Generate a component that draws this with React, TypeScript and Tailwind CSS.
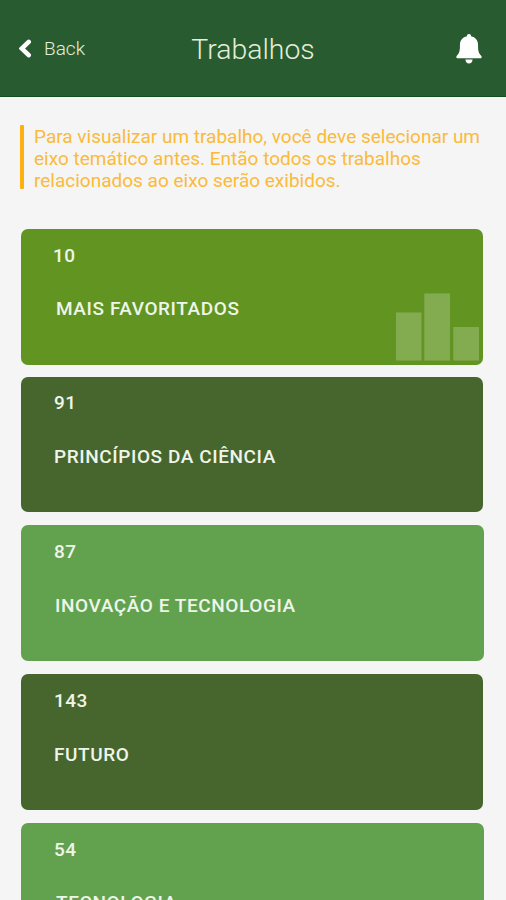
import React from 'react';
import { clsx } from 'clsx';

interface Axis {
  id: number;
  count: number;
  title: string;
  cardClass: string;
  countClass?: string;
  titleClass?: string;
  showChart?: boolean;
}

const axes: Axis[] = [
  {
    id: 1,
    count: 10,
    title: 'MAIS FAVORITADOS',
    cardClass: 'mr-[23.5px] mb-3 h-[135.5px] bg-[#629421]',
    countClass: '-ml-px -mb-px',
    titleClass: 'ml-0.5',
    showChart: true,
  },
  {
    id: 2,
    count: 91,
    title: 'PRINCÍPIOS DA CIÊNCIA',
    cardClass: 'mr-[23.5px] mb-[13px] h-[135.5px] bg-[#47662e]',
    countClass: '-mt-px',
  },
  {
    id: 3,
    count: 87,
    title: 'INOVAÇÃO E TECNOLOGIA',
    cardClass: 'mr-[22px] mb-[13px] h-[136px] bg-[#62a24f]',
    titleClass: 'ml-px',
  },
  {
    id: 4,
    count: 143,
    title: 'FUTURO',
    cardClass: 'mr-[23.5px] mb-[13px] h-[136px] bg-[#47662e]',
  },
  {
    id: 5,
    count: 54,
    title: 'TECNOLOGIA',
    cardClass: 'mr-[22px] h-[136px] bg-[#62a24f]',
    countClass: '-mb-px',
    titleClass: 'ml-0.5',
  },
];

const Header: React.FC = () => (
  <header className="grid h-[97px] shrink-0 grid-cols-3 items-center border-b border-[#124d1b] bg-[#285c30] text-[#e4efdb]">
    <button type="button" className="flex items-center pl-[19px] text-left">
      <svg width="13" height="19" viewBox="0 0 13 19" fill="none" aria-hidden="true">
        <path d="M9.7 2.9 2.7 9.5 9.7 16.1" stroke="#fff" strokeWidth="4.6" strokeLinecap="round" />
      </svg>
      <span className="ml-3 pt-px text-[19px] leading-6 font-light">Back</span>
    </button>
    <h1 className="pt-[3px] text-center text-[28.4px] leading-9 font-light">Trabalhos</h1>
    <button type="button" aria-label="Notificações" className="mr-6 pt-px justify-self-end">
      <svg width="26" height="30" viewBox="0 0 27 30" preserveAspectRatio="none" fill="#fff" aria-hidden="true">
        <path d="M13.5 0c-1.3 0-2.1.8-2.1 1.8v.5C6.8 3.2 4.1 6.5 4.1 11c0 5.5-.4 7.9-3 10.6C-.3 22.9.3 24.3 2 24.3h23c1.7 0 2.3-1.4.9-2.7-2.6-2.7-3-5.1-3-10.6 0-4.5-2.7-7.8-7.3-8.7v-.5C15.6.8 14.8 0 13.5 0Z" />
        <path d="M9.8 25.4h7.4c-.2 2.4-1.6 4-3.7 4s-3.5-1.6-3.7-4Z" />
      </svg>
    </button>
  </header>
);

const Chart: React.FC = () => (
  <svg className="absolute right-1 bottom-1" width="83" height="68" viewBox="0 0 83 68" fill="#83ac51" aria-hidden="true">
    <rect x="0" y="19.5" width="25.5" height="48" />
    <rect x="28.3" y="0.5" width="25.7" height="67" />
    <rect x="57.3" y="34" width="25.7" height="33.5" />
  </svg>
);

const AxisCard: React.FC<{ axis: Axis }> = ({ axis }) => (
  <li
    className={clsx(
      'relative flex shrink-0 flex-col rounded-[7px] pt-[15px] pl-[33px] text-[#eef5ea]',
      axis.cardClass
    )}
  >
    <span className={clsx('text-[19px] leading-6 font-medium tracking-[0.5px]', axis.countClass)}>
      {axis.count}
    </span>
    <span className={clsx('mt-[30px] text-[19px] leading-6 font-medium tracking-[0.58px]', axis.titleClass)}>
      {axis.title}
    </span>
    {axis.showChart && <Chart />}
  </li>
);

export default function App() {
  return (
    <div className="flex h-[900px] w-full flex-col overflow-hidden bg-[#f5f5f5] font-['Roboto',sans-serif]">
      <Header />
      <div className="mt-[28px] mr-4 ml-[19.5px] flex h-16 shrink-0 items-stretch">
        <div className="w-[4.5px] shrink-0 rounded-[1px] bg-[#feb010]" />
        <p className="ml-2.5 pt-px text-[19px] leading-[22.2px] text-[#fbba3a]">
          Para visualizar um trabalho, você deve selecionar um
          <br />
          eixo temático antes. Então todos os trabalhos
          <br />
          relacionados ao eixo serão exibidos.
        </p>
      </div>
      <ul className="mt-10 ml-[21px] flex flex-col">
        {axes.map((axis) => (
          <AxisCard key={axis.id} axis={axis} />
        ))}
      </ul>
    </div>
  );
}
